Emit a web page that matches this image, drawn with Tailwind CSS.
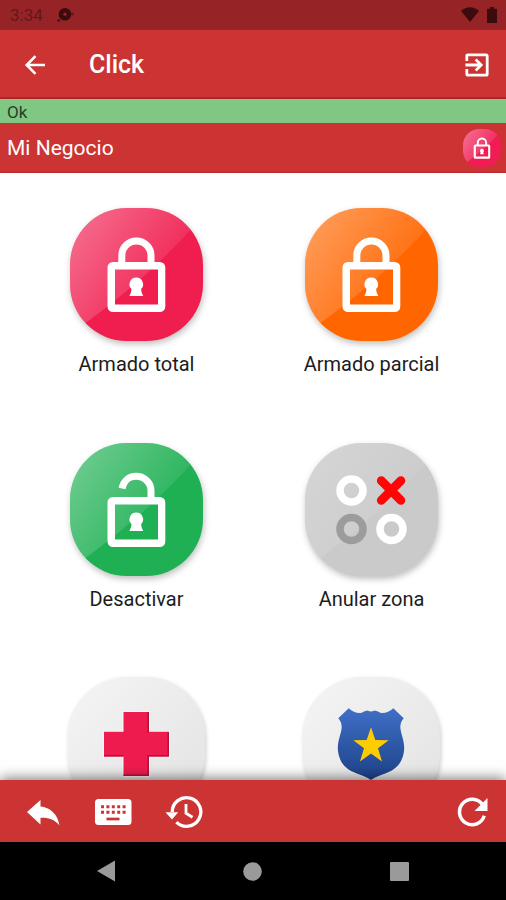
<!DOCTYPE html>
<html lang="es">
<head>
<meta charset="utf-8">
<meta name="viewport" content="width=device-width, initial-scale=1">
<title>Click</title>
<script src="https://cdn.jsdelivr.net/npm/@tailwindcss/browser@4"></script>
</head>
<body class="flex h-screen flex-col overflow-hidden bg-white font-[Roboto,sans-serif]">

<!-- Shared icon parts -->
<svg class="absolute size-0" aria-hidden="true">
  <defs>
    <linearGradient id="shine" gradientUnits="userSpaceOnUse" x1="5" y1="20" x2="85" y2="75">
      <stop offset="0" stop-color="#fff" stop-opacity=".34"/>
      <stop offset="1" stop-color="#fff" stop-opacity=".08"/>
    </linearGradient>
    <linearGradient id="pale" x1="0" y1="0" x2="1" y2="1">
      <stop offset="0" stop-color="#f5f5f5"/>
      <stop offset="1" stop-color="#e2e2e2"/>
    </linearGradient>
    <linearGradient id="badge" x1="0" y1="0" x2="0" y2="1">
      <stop offset="0" stop-color="#3f6fc6"/>
      <stop offset="1" stop-color="#1d4288"/>
    </linearGradient>
    <clipPath id="tile"><rect width="133" height="133" rx="57"/></clipPath>
    <g id="gloss" clip-path="url(#tile)">
      <path d="M0 0H133V8Q78 72 0 126Z" fill="url(#shine)"/>
    </g>
    <g id="lockbody">
      <rect x="37.500" y="54" width="57.500" height="50" rx="5.500" fill="#fff"/>
      <path d="M66.300 69.500a6.800 6.800 0 0 1 4.200 12.200L73 88H59.600L62.100 81.700A6.800 6.800 0 0 1 66.300 69.500Z" fill="#fff"/>
    </g>
    <g id="lockframe" fill="#fff">
      <path fill-rule="evenodd" d="M43 54H89.800a5.500 5.500 0 0 1 5.500 5.500V98.500a5.500 5.500 0 0 1-5.500 5.500H43a5.500 5.500 0 0 1-5.500-5.500V59.500A5.500 5.500 0 0 1 43 54ZM45 61.500V96.500H88V61.500Z"/>
      <path d="M66.300 69.500a6.800 6.800 0 0 1 4.800 11.600Q71 84.500 73.200 88H59.400Q61.600 84.500 61.500 81.100A6.800 6.800 0 0 1 66.300 69.500Z"/>
    </g>
    <g id="lock">
      <use href="#lockframe"/>
      <path d="M51.800 57V47.500a14.600 14.600 0 0 1 29.200 0V57" fill="none" stroke="#fff" stroke-width="7"/>
    </g>
  </defs>
</svg>

<div class="flex h-[30px] shrink-0 items-center justify-between bg-[#962427] pl-[10px] pr-[9px] text-[#3c0b0d]">
  <div class="flex items-center gap-[14px]">
    <time class="text-[17px] leading-5 text-[#651618]">3:34</time>
    <svg class="h-4 w-[18px]" viewBox="0 0 18 16" fill="currentColor" aria-hidden="true">
      <path fill-rule="evenodd" d="M8 1a6.300 6.300 0 1 1 0 12.600A6.300 6.300 0 0 1 8 1Zm0 4.500a1.800 1.800 0 1 0 0 3.600 1.800 1.800 0 0 0 0-3.600Z"/>
      <circle cx="1.800" cy="13.500" r="1.300"/><circle cx="15.500" cy="7" r="1.300" opacity=".6"/>
    </svg>
  </div>
  <div class="flex items-center gap-2">
    <svg class="h-4 w-[18px]" viewBox="0 0 18 16" fill="currentColor" aria-hidden="true"><path d="M0 4Q9-3.500 18 4L9 15Z"/></svg>
    <svg class="h-4 w-[10px]" viewBox="0 0 10 16" fill="currentColor" aria-hidden="true"><path d="M3 0h4v1.700h3V16H0V1.700h3Z"/></svg>
  </div>
</div>

<header class="flex h-[69px] shrink-0 items-center border-b-2 border-[#b02329] bg-[#cc3333] pl-[20px] pr-[14px] pt-[3px] text-white">
  <button type="button" aria-label="Volver" class="p-1">
    <svg class="size-[22px]" viewBox="0 0 22 22" fill="none" stroke="currentColor" stroke-width="2.600" aria-hidden="true"><path d="M21 11H3M11.500 2.200L2.700 11l8.800 8.800"/></svg>
  </button>
  <h1 class="ml-[39px] flex-1 text-[25px] font-medium leading-8">Click</h1>
  <button type="button" aria-label="Salir" class="p-0.5">
    <svg class="size-[26px]" viewBox="0 0 26 26" fill="none" stroke="currentColor" stroke-width="2.800" aria-hidden="true">
      <path d="M2.800 9V4Q2.800 2.800 4 2.800H22Q23.200 2.800 23.200 4V22Q23.200 23.200 22 23.200H4Q2.800 23.200 2.800 22V17"/>
      <path d="M1.400 13H16.500M11.700 7.500L17.200 13l-5.500 5.500"/>
    </svg>
  </button>
</header>

<p role="status" class="h-6 shrink-0 bg-[#81c784] pl-[7px] text-[17px] leading-[26px] text-[#26402a]">Ok</p>

<section class="flex h-[50px] shrink-0 items-center justify-between border-b border-[#b92a2c] bg-[#cc3333] pl-[7px] pr-[5px] text-white">
  <h2 class="text-[21px] leading-7">Mi Negocio</h2>
  <svg class="size-[38px]" viewBox="0 0 133 133" role="img" aria-label="Armado total">
    <rect width="133" height="133" rx="57" fill="#f01d55"/><use href="#gloss"/><use href="#lock"/>
  </svg>
</section>

<main class="min-h-0 flex-1 overflow-y-auto [scrollbar-width:none]">
  <div class="grid grid-cols-2 gap-y-16 pb-8 pl-[19px] pr-[17px] pt-[34px] text-[20px] leading-7 text-[#1c1c1c]">
    <button type="button" class="flex flex-col items-center gap-1.5">
      <svg class="size-[137px] overflow-visible drop-shadow-[1px_3px_3px_rgba(0,0,0,0.25)]" viewBox="-2 -1 137 137" aria-hidden="true">
        <rect width="133" height="133" rx="57" fill="#f01d4f"/><use href="#gloss"/><use href="#lock"/>
      </svg>
      <span>Armado total</span>
    </button>
    <button type="button" class="flex flex-col items-center gap-1.5">
      <svg class="size-[137px] overflow-visible drop-shadow-[1px_3px_3px_rgba(0,0,0,0.25)]" viewBox="-2 -1 137 137" aria-hidden="true">
        <rect width="133" height="133" rx="57" fill="#ff6600"/><use href="#gloss"/><use href="#lock"/>
      </svg>
      <span>Armado parcial</span>
    </button>
    <button type="button" class="flex flex-col items-center gap-1.5">
      <svg class="size-[137px] overflow-visible drop-shadow-[1px_3px_3px_rgba(0,0,0,0.25)]" viewBox="-2 -1 137 137" aria-hidden="true">
        <rect width="133" height="133" rx="57" fill="#1eb053"/><use href="#gloss"/><use href="#lockframe"/>
        <path d="M52 45.500C53.500 38 59 33.200 66 33.200c8.500 0 15 6.500 15 14.300V57" fill="none" stroke="#fff" stroke-width="7"/>
      </svg>
      <span>Desactivar</span>
    </button>
    <button type="button" class="flex flex-col items-center gap-1.5">
      <svg class="size-[137px] overflow-visible drop-shadow-[1px_3px_3px_rgba(0,0,0,0.25)]" viewBox="-2 -1 137 137" aria-hidden="true">
        <rect width="133" height="133" rx="57" fill="#cacaca"/><use href="#gloss" opacity=".6"/>
        <g fill="none" stroke="#fff" stroke-width="7.500">
          <circle cx="46.500" cy="47.500" r="11.500"/>
          <circle cx="46.500" cy="86" r="11.500" stroke="#9c9c9c"/>
          <circle cx="86.500" cy="86" r="11.500"/>
          <path d="M76.300 37.700l19.600 19.600M95.900 37.700L76.300 57.300" stroke="#ff0505" stroke-width="8.800" stroke-linecap="round"/>
        </g>
      </svg>
      <span>Anular zona</span>
    </button>
    <button type="button" aria-label="Emergencia médica" class="flex flex-col items-center">
      <svg class="size-[137px] overflow-visible drop-shadow-[1px_2px_2px_rgba(0,0,0,0.2)]" viewBox="0 0 137 137" aria-hidden="true">
        <rect width="137" height="137" rx="59" fill="url(#pale)"/>
        <path d="M55.500 35H81V54.700H101V79.500H81V99H55.500V79.500H36V54.700H55.500Z" fill="#ee1c4e" stroke="#fff" stroke-opacity=".6" stroke-width="2" paint-order="stroke"/>
        <path d="M80.200 35V55.500M100.200 55V78.700H80.200V98.200H55.500M36 78.700H55.500" fill="none" stroke="#b3123a" stroke-width="1.500"/>
      </svg>
    </button>
    <button type="button" aria-label="Policía" class="flex flex-col items-center">
      <svg class="size-[137px] overflow-visible drop-shadow-[1px_2px_2px_rgba(0,0,0,0.2)]" viewBox="0 0 137 137" aria-hidden="true">
        <rect width="137" height="137" rx="59" fill="url(#pale)"/>
        <path d="M35.300 41.300L45.700 31.300Q51 36.500 58 36Q62 33.500 64.500 33.500Q68 35.500 71.500 33.500Q74 33.500 78 36Q85 36.500 90.300 31.300L100.700 41.300Q96.500 46 97.500 52C98.500 59 102 65 101 74C99.800 84 95 90 88 94C80 98 73 99 68 103C63 99 56 98 48 94C41 90 36.200 84 35 74C34 65 37.500 59 38.500 52Q39.500 46 35.300 41.300Z" fill="url(#badge)"/>
        <path d="M68 50.300L72.300 63 85.700 63.300 75 71.300 79 84.500 68 76.500 57 84.500 61 71.300 50.300 63.300 63.700 63Z" fill="#ffcc00"/>
      </svg>
    </button>
  </div>
</main>

<nav class="relative z-10 flex h-[62px] shrink-0 items-center bg-[#cc3333] pl-[26px] pr-[17px] text-white shadow-[0_-2px_12px_rgba(0,0,0,0.5)]">
  <button type="button" aria-label="Atrás">
    <svg class="h-[34px] w-[34px]" viewBox="0 0 34 34" fill="currentColor" aria-hidden="true"><path d="M1 18L14.500 6V12.500C24 13.500 31.500 19.500 33.500 31.500C28.500 25.500 23 23.500 14.500 23.800V30.500Z"/></svg>
  </button>
  <button type="button" aria-label="Teclado" class="ml-[34px]">
    <svg class="h-[34px] w-[38px]" viewBox="0 0 38 34" aria-hidden="true">
      <rect x="1" y="5" width="36.500" height="26" rx="3.500" fill="currentColor"/>
      <path d="M7 12.800H32M7 18.300H32" fill="none" stroke="#cc3333" stroke-width="3" stroke-dasharray="3 2.400"/>
      <path d="M12.500 25H25.500" stroke="#cc3333" stroke-width="2.700"/>
    </svg>
  </button>
  <button type="button" aria-label="Historial" class="ml-[33px]">
    <svg class="h-[34px] w-[38px]" viewBox="0 0 38 34" fill="none" stroke="currentColor" stroke-width="3.300" aria-hidden="true">
      <path d="M7.200 18A14.300 14.300 0 1 1 11.400 28.100"/>
      <path d="M.500 18.200H13.200L7 25.500Z" fill="currentColor" stroke="none"/>
      <path d="M21 10V19.200L27.500 23.300" stroke-width="2.800"/>
    </svg>
  </button>
  <button type="button" aria-label="Actualizar" class="ml-auto">
    <svg class="h-[34px] w-8" viewBox="0 0 32 34" fill="none" stroke="currentColor" stroke-width="3.500" aria-hidden="true">
      <path d="M25.500 10.500A12.700 12.700 0 1 0 27.300 21.800"/>
      <path d="M30.500 4V17H17.500Z" fill="currentColor" stroke="none"/>
    </svg>
  </button>
</nav>

<nav class="relative z-10 flex h-[58px] shrink-0 items-center justify-center gap-32 bg-black text-[#9a9a9a]">
  <button type="button" aria-label="Retroceder"><svg class="h-[22px] w-[18px]" viewBox="0 0 18 22" fill="currentColor" aria-hidden="true"><path d="M0 11L18 .500V21.500Z"/></svg></button>
  <button type="button" aria-label="Inicio"><svg class="size-[19px]" viewBox="0 0 19 19" fill="currentColor" aria-hidden="true"><circle cx="9.500" cy="9.500" r="9.300"/></svg></button>
  <button type="button" aria-label="Recientes"><svg class="size-[19px]" viewBox="0 0 19 19" fill="currentColor" aria-hidden="true"><rect width="19" height="19" rx="1"/></svg></button>
</nav>
</body>
</html>
